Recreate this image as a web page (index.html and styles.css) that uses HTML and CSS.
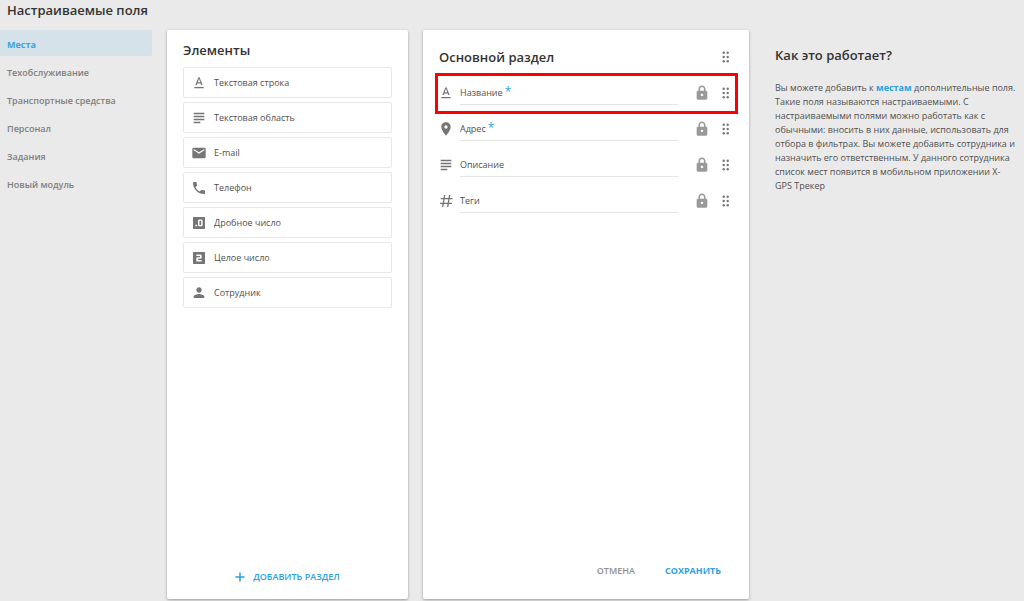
FILE: index.html
```html
<!DOCTYPE html>
<html lang="ru">
<head>
<meta charset="utf-8">
<meta name="viewport" content="width=device-width, initial-scale=1">
<title>Настраиваемые поля</title>
<link rel="stylesheet" href="styles.css">
</head>
<body>
<svg class="sprite" aria-hidden="true">
  <symbol id="i-text" viewBox="0 0 24 24"><path d="M5 18v2h14v-2H5zm4.500-5.200h5l.9 2.200h2.100L12.750 3.500h-1.500L6.500 15h2.100l.9-2.200zM12 5.480L13.870 11h-3.740L12 5.480z"/></symbol>
  <symbol id="i-area" viewBox="0 0 24 24"><path d="M4 4h16v2.200H4zM4 8.500h16v2.200H4zM4 13h16v2.200H4zM4 17.500h10v2.200H4z"/></symbol>
  <symbol id="i-mail" viewBox="0 0 24 24"><path d="M20 4H4c-1.100 0-2 .9-2 2v12c0 1.100.9 2 2 2h16c1.100 0 2-.9 2-2V6c0-1.100-.9-2-2-2zm0 4l-8 5-8-5V6l8 5 8-5v2z"/></symbol>
  <symbol id="i-phone" viewBox="0 0 24 24"><path d="M6.620 10.790c1.440 2.830 3.760 5.140 6.590 6.590l2.200-2.200c.27-.27.67-.36 1.020-.24 1.120.37 2.330.57 3.570.57.55 0 1 .45 1 1V20c0 .55-.45 1-1 1-9.390 0-17-7.610-17-17 0-.55.45-1 1-1h3.500c.55 0 1 .45 1 1 0 1.250.2 2.450.57 3.570.11.35.03.74-.25 1.020l-2.200 2.200z"/></symbol>
  <symbol id="i-decimal" viewBox="0 0 24 24"><path fill-rule="evenodd" d="M4 3h16a1 1 0 0 1 1 1v16a1 1 0 0 1-1 1H4a1 1 0 0 1-1-1V4a1 1 0 0 1 1-1zM6.500 14.800V17H9v-2.200zM12.500 6.800a2 2 0 0 0-2 2V15a2 2 0 0 0 2 2h3a2 2 0 0 0 2-2V8.800a2 2 0 0 0-2-2zm.2 2h2.600V15h-2.600z"/></symbol>
  <symbol id="i-integer" viewBox="0 0 24 24"><path fill-rule="evenodd" d="M4 3h16a1 1 0 0 1 1 1v16a1 1 0 0 1-1 1H4a1 1 0 0 1-1-1V4a1 1 0 0 1 1-1zM8 6.800v2.200h5.500v2H10a2 2 0 0 0-2 2v4.200h8V15h-5.500v-1.900H14a2 2 0 0 0 2-2V8.800a2 2 0 0 0-2-2z"/></symbol>
  <symbol id="i-person" viewBox="0 0 24 24"><path d="M12 11.500c2.210 0 4-1.790 4-4s-1.790-4-4-4-4 1.790-4 4 1.790 4 4 4zm0 2c-2.670 0-8 1.340-8 4v2h16v-2c0-2.660-5.330-4-8-4z"/></symbol>
  <symbol id="i-pin" viewBox="0 0 24 24"><path d="M12 2C8.130 2 5 5.130 5 9c0 5.250 7 13 7 13s7-7.750 7-13c0-3.870-3.130-7-7-7zm0 9.500a2.500 2.500 0 0 1 0-5 2.500 2.500 0 0 1 0 5z"/></symbol>
  <symbol id="i-hash" viewBox="0 0 24 24"><path fill="none" stroke="currentColor" stroke-width="2" d="M10 3L7 21M17.500 3l-3 18M4 8.500h18M3 15.500h18"/></symbol>
  <symbol id="i-lock" viewBox="0 0 24 24"><path d="M18 8.500h-.7V6c0-2.930-2.370-5.300-5.300-5.300S6.700 3.070 6.700 6v2.500H6c-1.100 0-2 .9-2 2v9.500c0 1.100.9 2 2 2h12c1.100 0 2-.9 2-2v-9.500c0-1.100-.9-2-2-2zm-6 8.300c-1.100 0-1.800-.7-1.800-1.800s.7-1.800 1.800-1.800 1.800.7 1.800 1.800-.7 1.800-1.800 1.800zm2.900-8.300H9.100V6c0-1.600 1.300-2.900 2.900-2.900s2.900 1.300 2.900 2.900v2.500z"/></symbol>
  <symbol id="i-drag" viewBox="0 0 8 12"><circle cx="1.700" cy="1.700" r="1.200"/><circle cx="5.700" cy="1.700" r="1.200"/><circle cx="1.700" cy="6" r="1.200"/><circle cx="5.700" cy="6" r="1.200"/><circle cx="1.700" cy="10.300" r="1.200"/><circle cx="5.700" cy="10.300" r="1.200"/></symbol>
  <symbol id="i-plus" viewBox="0 0 10 10"><path fill="none" stroke="currentColor" stroke-width="1.500" d="M5 .5v9M.5 5h9"/></symbol>
</svg>

<header class="header"><h1 class="heading">Настраиваемые поля</h1></header>

<div class="layout">
  <nav class="nav" aria-label="Модули">
    <a class="nav-link nav-link-active" href="#" aria-current="page">Места</a>
    <a class="nav-link" href="#">Техобслуживание</a>
    <a class="nav-link" href="#">Транспортные средства</a>
    <a class="nav-link" href="#">Персонал</a>
    <a class="nav-link" href="#">Задания</a>
    <a class="nav-link" href="#">Новый модуль</a>
  </nav>

  <section class="card elements">
    <h2 class="heading">Элементы</h2>
    <div class="element-list">
      <button class="element" type="button"><svg class="icon"><use href="#i-text"/></svg>Текстовая строка</button>
      <button class="element" type="button"><svg class="icon"><use href="#i-area"/></svg>Текстовая область</button>
      <button class="element" type="button"><svg class="icon"><use href="#i-mail"/></svg>E-mail</button>
      <button class="element" type="button"><svg class="icon"><use href="#i-phone"/></svg>Телефон</button>
      <button class="element" type="button"><svg class="icon"><use href="#i-decimal"/></svg>Дробное число</button>
      <button class="element" type="button"><svg class="icon"><use href="#i-integer"/></svg>Целое число</button>
      <button class="element" type="button"><svg class="icon"><use href="#i-person"/></svg>Сотрудник</button>
    </div>
    <button class="action action-add" type="button"><svg class="plus"><use href="#i-plus"/></svg>Добавить раздел</button>
  </section>

  <form class="card section">
    <div class="section-head">
      <h2 class="heading">Основной раздел</h2>
      <button class="tool" type="button" aria-label="Переместить раздел"><svg class="drag"><use href="#i-drag"/></svg></button>
    </div>
    <div class="row row-marked">
      <svg class="icon"><use href="#i-text"/></svg>
      <div class="field"><label class="label" for="f-name">Название<span class="required">*</span></label><input class="input" id="f-name" type="text"></div>
      <svg class="icon lock"><use href="#i-lock"/></svg>
      <button class="tool" type="button" aria-label="Переместить поле"><svg class="drag"><use href="#i-drag"/></svg></button>
    </div>
    <div class="row">
      <svg class="icon"><use href="#i-pin"/></svg>
      <div class="field"><label class="label" for="f-address">Адрес<span class="required">*</span></label><input class="input" id="f-address" type="text"></div>
      <svg class="icon lock"><use href="#i-lock"/></svg>
      <button class="tool" type="button" aria-label="Переместить поле"><svg class="drag"><use href="#i-drag"/></svg></button>
    </div>
    <div class="row">
      <svg class="icon"><use href="#i-area"/></svg>
      <div class="field"><label class="label" for="f-desc">Описание</label><input class="input" id="f-desc" type="text"></div>
      <svg class="icon lock"><use href="#i-lock"/></svg>
      <button class="tool" type="button" aria-label="Переместить поле"><svg class="drag"><use href="#i-drag"/></svg></button>
    </div>
    <div class="row">
      <svg class="icon"><use href="#i-hash"/></svg>
      <div class="field"><label class="label" for="f-tags">Теги</label><input class="input" id="f-tags" type="text"></div>
      <svg class="icon lock"><use href="#i-lock"/></svg>
      <button class="tool" type="button" aria-label="Переместить поле"><svg class="drag"><use href="#i-drag"/></svg></button>
    </div>
    <div class="actions">
      <button class="action action-cancel" type="button">Отмена</button>
      <button class="action action-save" type="submit">Сохранить</button>
    </div>
  </form>

  <aside class="help">
    <h2 class="heading">Как это работает?</h2>
    <p class="help-text">Вы можете добавить к <a class="link" href="#">местам</a> дополнительные поля. Такие поля называются настраиваемыми. С настраиваемыми полями можно работать как с обычными: вносить в них данные, использовать для отбора в фильтрах. Вы можете добавить сотрудника и назначить его ответственным. У данного сотрудника список мест появится в мобильном приложении X-GPS Трекер</p>
  </aside>
</div>
</body>
</html>
```
FILE: styles.css
```css
* { box-sizing: border-box; }

body {
  margin: 0;
  min-height: 100vh;
  display: flex;
  flex-direction: column;
  background: #eaeaea;
  color: #505050;
  font: 9px/14px "Open Sans", "Noto Sans", sans-serif;
}

button, input { font: inherit; color: inherit; }
button { border: 0; padding: 0; background: none; cursor: pointer; }
a { text-decoration: none; }

.sprite { position: absolute; width: 0; height: 0; }

.header { height: 30px; padding: 0 7px; }
.heading { margin: 0; font-size: 13px; line-height: 20px; font-weight: 600; color: #333; }

.layout {
  flex: 1;
  display: grid;
  grid-template-columns: 152px minmax(0, 241fr) minmax(0, 326fr) minmax(0, 260fr);
  column-gap: 15px;
  padding-bottom: 2px;
}

.nav { display: flex; flex-direction: column; gap: 2px; }
.nav-link {
  height: 26px;
  padding: 2px 7px 0;
  line-height: 26px;
  font-weight: 600;
  color: #808080;
  border-radius: 0 2px 2px 0;
}
.nav-link-active { background: #d5e2ea; color: #3ca2e0; font-weight: 700; }

.card {
  display: flex;
  flex-direction: column;
  background: #fff;
  border-radius: 2px;
  box-shadow: 0 1px 3px rgba(0, 0, 0, .35);
}

.icon { flex: none; width: 16px; height: 16px; fill: currentColor; color: #757575; }

.elements { padding: 10px 16px 12px; }
.element-list { display: flex; flex-direction: column; gap: 4px; margin-top: 7px; }
.element {
  display: flex;
  align-items: center;
  gap: 7px;
  height: 31px;
  padding: 0 7px;
  border: 1px solid #e8e8e8;
  border-radius: 2px;
  text-align: left;
}

.action {
  color: #2f9fe0;
  font-weight: 600;
  line-height: 20px;
  text-transform: uppercase;
}
.action-add {
  display: flex;
  align-items: center;
  gap: 8px;
  margin: auto auto 0;
}
.action-cancel { color: #909090; }
.action-save { font-weight: 700; }
.plus { width: 10px; height: 10px; }

.section { padding: 17px 14px 18px 15px; }
.section-head {
  display: flex;
  align-items: center;
  justify-content: space-between;
  padding-left: 1px;
  margin-bottom: 9px;
}
.row {
  display: flex;
  align-items: center;
  height: 35px;
  padding-bottom: 2px;
  margin-bottom: 1px;
}
.row-marked { outline: 3px solid #f00; }
.field {
  flex: 1;
  display: flex;
  align-items: center;
  min-width: 0;
  height: 25px;
  margin: 0 16px 0 6px;
  padding-top: 2px;
  border-bottom: 1px solid #e4e4e4;
}
.label { display: flex; }
.required { margin-left: 2px; font-size: 12px; line-height: 12px; color: #3ca2e0; }
.input {
  flex: 1;
  min-width: 0;
  padding: 0;
  border: 0;
  outline: 0;
  background: none;
}
.lock { color: #999; }
.tool { display: flex; justify-content: center; width: 32px; margin-right: -7px; }
.drag { width: 8px; height: 12px; fill: #777; }
.actions {
  display: flex;
  justify-content: flex-end;
  gap: 30px;
  margin-top: auto;
  padding-right: 14px;
}

.help { padding: 15px 7px 0 11px; }
.help-text { margin: 16px 0 0; }
.link { color: #2f9fe0; font-weight: 700; }
```
